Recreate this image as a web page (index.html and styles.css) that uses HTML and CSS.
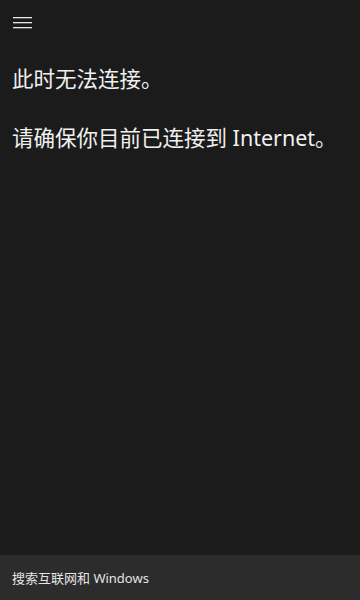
FILE: index.html
```html
<!DOCTYPE html>
<html lang="zh-CN">
<head>
<meta charset="utf-8">
<link rel="stylesheet" href="styles.css">
</head>
<body>
<div class="app">
  <header class="topbar">
    <button class="menu" aria-label="菜单">
      <svg width="20" height="12" viewBox="0 0 20 12"><rect x="0" y="0" width="19" height="1.3" fill="#e6e6e6"/><rect x="0" y="5" width="19" height="1.3" fill="#e6e6e6"/><rect x="0" y="10" width="19" height="1.3" fill="#e6e6e6"/></svg>
    </button>
  </header>
  <main class="content">
    <p class="msg">此时无法连接。</p>
    <p class="msg">请确保你目前已连接到 Internet。</p>
  </main>
  <footer class="searchbar">
    <span class="search-text">搜索互联网和 Windows</span>
  </footer>
</div>
</body>
</html>
```
FILE: styles.css
```css
html, body {
  margin: 0;
  padding: 0;
  height: 100%;
  background: #1b1b1b;
}
body {
  font-family: "Noto Sans", "Noto Sans CJK SC", sans-serif;
  color: #f0f0f0;
}
.app {
  height: 600px;
  display: flex;
  flex-direction: column;
}
.topbar {
  height: 46px;
  display: flex;
  align-items: flex-start;
}
.menu {
  background: none;
  border: 0;
  padding: 0;
  margin: 17px 0 0 13px;
  width: 20px;
  height: 12px;
  display: block;
}
.menu svg { display: block; }
.content {
  flex: 1;
  padding: 17px 12px 0;
}
.msg {
  margin: 0 0 27px;
  font-size: 21.5px;
  line-height: 32px;
  font-weight: 400;
}
.searchbar {
  height: 45px;
  background: #2c2c2c;
  display: flex;
  align-items: center;
  padding: 0 12px;
}
.search-text {
  font-size: 13px;
  color: #e4e4e4;
}
```
